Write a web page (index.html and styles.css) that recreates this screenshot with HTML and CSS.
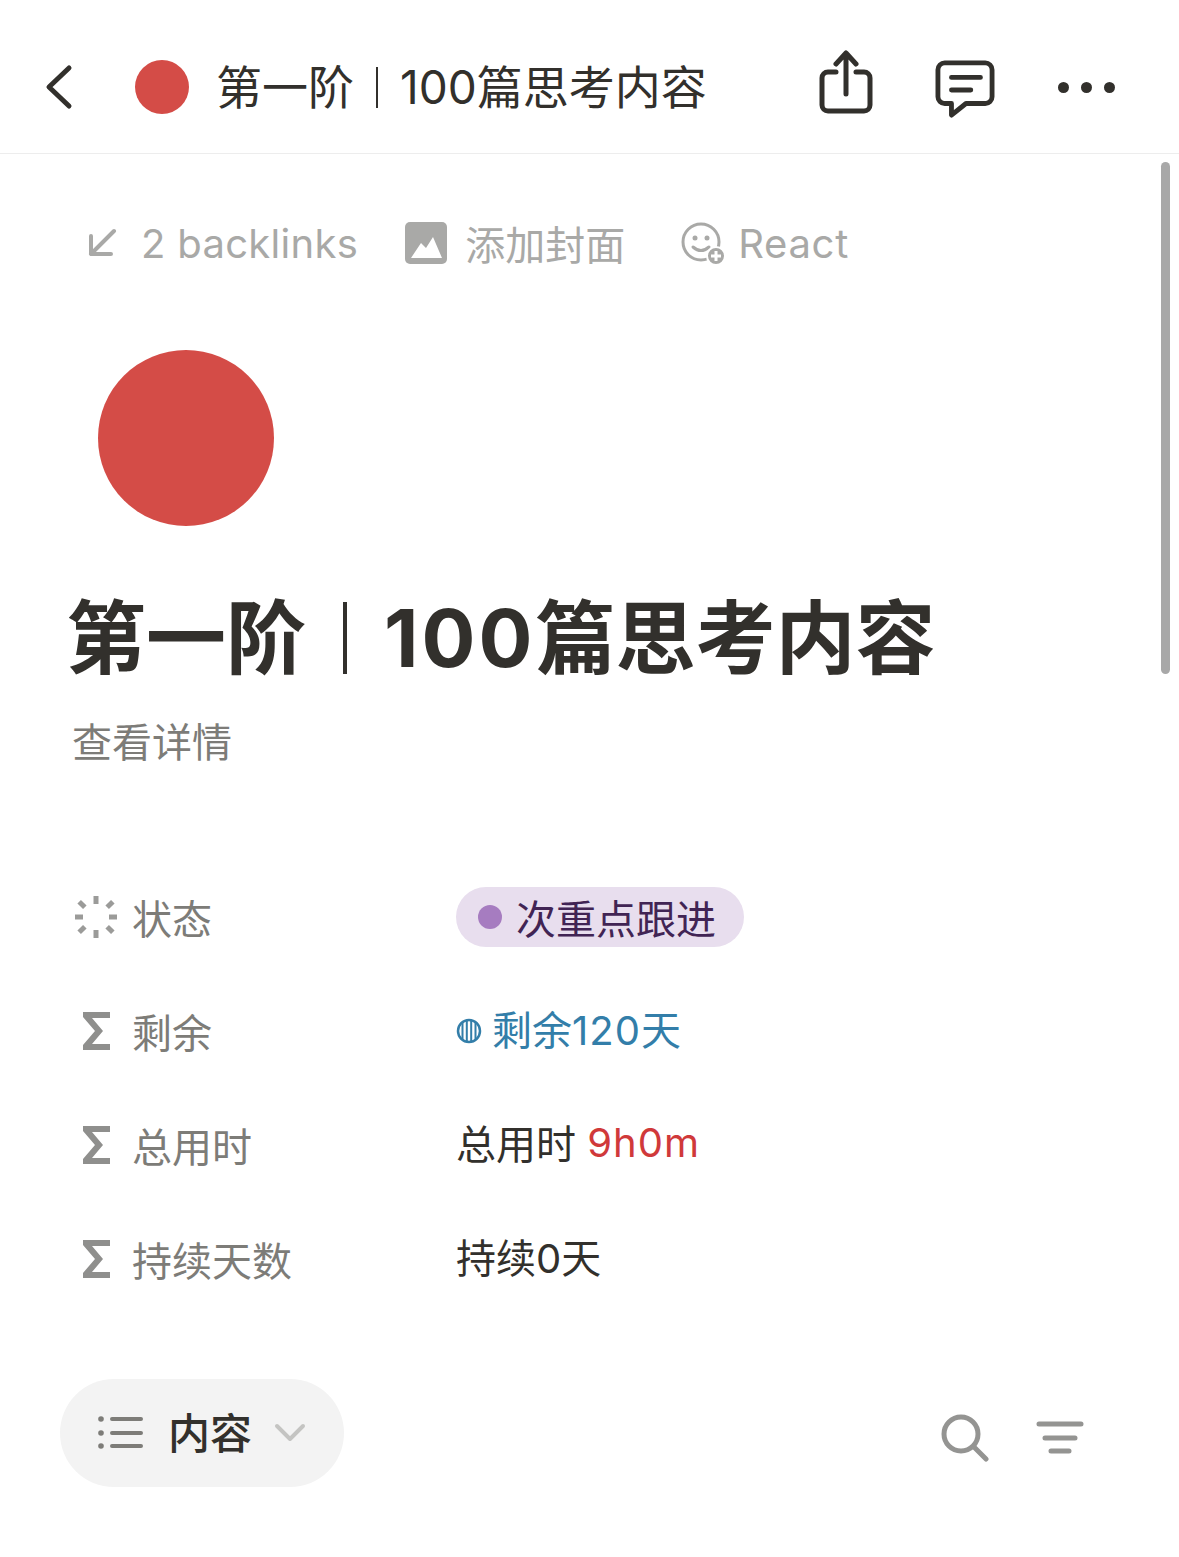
FILE: index.html
```html
<!DOCTYPE html>
<html lang="zh-CN">
<head>
    <meta charset="UTF-8">
    <title>第一阶｜100篇思考内容</title>
    <link rel="stylesheet" href="styles.css">
</head>
<body>
    <header class="topbar">
        <svg class="back-icon" width="34" height="50" viewBox="0 0 34 50"><path d="M25 6 5 25l20 19"/></svg>
        <div class="top-dot"></div>
        <div class="top-title">第一阶<span class="top-sep"></span>100篇思考内容</div>
        <div class="top-actions">
            <svg class="top-icon share-icon" width="56" height="64" viewBox="0 0 56 64"><path d="M17 22H9a6 6 0 0 0-6 6v27a6 6 0 0 0 6 6h36a6 6 0 0 0 6-6V28a6 6 0 0 0-6-6h-8"/><path d="M27 44V4M17 14 27 3l10 11"/></svg>
            <svg class="top-icon comment-icon" width="60" height="58" viewBox="0 0 62 60"><path d="M10 3h42a7 7 0 0 1 7 7v28a7 7 0 0 1-7 7H32L17 57V45h-7a7 7 0 0 1-7-7V10a7 7 0 0 1 7-7z"/><path d="M17 18h30M17 31h20"/></svg>
            <div class="more-dots"><i></i><i></i><i></i></div>
        </div>
    </header>

    <main class="page">
        <div class="meta-row">
            <div class="meta-item meta-backlinks">
                <svg width="30" height="30" viewBox="0 0 30 30"><path d="M27 3 4 26M4 8v18h20"/></svg>
                <span class="meta-latin">2 backlinks</span>
            </div>
            <div class="meta-item meta-cover">
                <svg width="42" height="42" viewBox="0 0 42 42"><rect width="42" height="42" rx="5" fill="#a9a9a7"/><path d="M6 36 16 21l5 5 7-11 9 21z" fill="#fff"/></svg>
                <span>添加封面</span>
            </div>
            <div class="meta-item meta-react">
                <svg width="44" height="44" viewBox="0 0 44 44"><circle cx="20" cy="21" r="18" fill="none" stroke="#a9a9a7" stroke-width="3"/><circle cx="14" cy="17" r="2.500" fill="#a9a9a7"/><circle cx="26" cy="17" r="2.500" fill="#a9a9a7"/><path d="M12 26q8 7 16 0" fill="none" stroke="#a9a9a7" stroke-width="3" stroke-linecap="round"/><circle cx="35" cy="35" r="9" fill="#a9a9a7" stroke="#fff" stroke-width="2"/><path d="M35 30v10M30 35h10" stroke="#fff" stroke-width="3"/></svg>
                <span class="meta-latin">React</span>
            </div>
        </div>

        <div class="page-dot"></div>
        <h1 class="page-title">第一阶<span class="title-sep"></span><span class="title-num">100</span>篇思考内容</h1>
        <div class="detail-link">查看详情</div>

        <div class="props">
            <div class="prop">
                <div class="prop-label">
                    <svg class="prop-icon" width="42" height="42" viewBox="0 0 42 42"><g fill="#9b9b99"><rect x="18.500" y="0" width="5" height="8"/><rect x="18.500" y="34" width="5" height="8"/><rect x="0" y="18.500" width="8" height="5"/><rect x="34" y="18.500" width="8" height="5"/><rect x="3" y="6" width="8" height="5" transform="rotate(45 7 8.500)"/><rect x="31" y="6" width="8" height="5" transform="rotate(-45 35 8.500)"/><rect x="3" y="31" width="8" height="5" transform="rotate(-45 7 33.500)"/><rect x="31" y="31" width="8" height="5" transform="rotate(45 35 33.500)"/></g></svg>
                    <span>状态</span>
                </div>
                <div class="prop-value">
                    <span class="pill"><i class="pill-dot"></i>次重点跟进</span>
                </div>
            </div>
            <div class="prop">
                <div class="prop-label">
                    <svg class="prop-icon" width="42" height="42" viewBox="0 0 42 42"><path class="sigma" d="M8 2h27v6H17l11 13-11 13h18v6H8v-5l12-14L8 7z"/></svg>
                    <span>剩余</span>
                </div>
                <div class="prop-value value-up value-blue">
                    <svg class="ring-icon" width="26" height="26" viewBox="0 0 26 26"><circle cx="13" cy="13" r="11" fill="none" stroke="#337ea9" stroke-width="2.500"/><path d="M6.500 4v18M10.800 2v22M15.200 2v22M19.500 4v18" stroke="#337ea9" stroke-width="2"/></svg>
                    <span>剩余<span class="value-num">120</span>天</span>
                </div>
            </div>
            <div class="prop">
                <div class="prop-label">
                    <svg class="prop-icon" width="42" height="42" viewBox="0 0 42 42"><path class="sigma" d="M8 2h27v6H17l11 13-11 13h18v6H8v-5l12-14L8 7z"/></svg>
                    <span>总用时</span>
                </div>
                <div class="prop-value value-up">总用时 <span class="value-red value-num">9h0m</span></div>
            </div>
            <div class="prop">
                <div class="prop-label">
                    <svg class="prop-icon" width="42" height="42" viewBox="0 0 42 42"><path class="sigma" d="M8 2h27v6H17l11 13-11 13h18v6H8v-5l12-14L8 7z"/></svg>
                    <span>持续天数</span>
                </div>
                <div class="prop-value value-up">持续0天</div>
            </div>
        </div>

        <div class="toolbar">
            <div class="view-pill">
                <svg class="list-icon" width="46" height="36" viewBox="0 0 46 36"><g fill="#7d7c78"><circle cx="4" cy="4" r="2.800"/><circle cx="4" cy="18" r="2.800"/><circle cx="4" cy="31" r="2.800"/></g><path d="M15 4h29M15 18h29M15 31h29"/></svg>
                <span class="view-name">内容</span>
                <svg class="chev-icon" width="32" height="20" viewBox="0 0 32 20"><path d="M3 3 16 16 29 3"/></svg>
            </div>
            <div class="tool-icons">
                <svg width="48" height="48" viewBox="0 0 48 48"><circle cx="20" cy="20" r="17"/><path d="m33 33 12 12"/></svg>
                <svg width="48" height="34" viewBox="0 0 48 34"><path d="M3 3h42M9 17h30M15 30h18"/></svg>
            </div>
        </div>
    </main>

    <div class="scroll-thumb"></div>
</body>
</html>
```

FILE: styles.css
```css
*{margin: 0; padding: 0; box-sizing: border-box;}
body{
    width: 100%;
    height: 1557px;
    overflow: hidden;
    background-color: #fff;
    color: #32302c;
    font-family: Inter, "Noto Sans CJK SC", sans-serif;
}
svg{display: block; flex: none;}

/* top bar */
.topbar{
    height: 154px;
    padding: 21px 64px 0 44px;
    display: flex;
    align-items: center;
    border-bottom: 1px solid #ededed;
}
.back-icon path{
    fill: none;
    stroke: #32302c;
    stroke-width: 5;
    stroke-linecap: round;
    stroke-linejoin: round;
}
.top-dot{
    width: 54px;
    height: 54px;
    margin-left: 57px;
    border-radius: 50%;
    background-color: #d44c47;
}
.top-title{
    margin-left: 27px;
    font-size: 46px;
    line-height: 56px;
    white-space: nowrap;
    display: flex;
    align-items: center;
}
.top-sep{
    width: 2px;
    height: 41px;
    margin: 0 22px;
    background-color: #32302c;
}
.top-actions{
    margin-left: auto;
    display: flex;
    align-items: center;
}
.top-icon{
    fill: none;
    stroke: #32302c;
    stroke-width: 5;
    stroke-linecap: round;
    stroke-linejoin: round;
}
.share-icon{margin-bottom: 11px;}
.comment-icon{margin: 4px 63px 0 60px;}
.more-dots{
    display: flex;
    gap: 12px;
}
.more-dots i{
    width: 11px;
    height: 11px;
    border-radius: 50%;
    background-color: #32302c;
}

/* content */
.page{
    padding: 0 60px;
}
.meta-row{
    height: 70px;
    margin-top: 54px;
    padding-left: 27px;
    display: flex;
    align-items: center;
    color: #a9a9a7;
    font-size: 40px;
}
.meta-item{
    display: flex;
    align-items: center;
}
.meta-latin{letter-spacing: .3px;}
.meta-backlinks svg{
    fill: none;
    stroke: #a9a9a7;
    stroke-width: 4;
    stroke-linecap: round;
    stroke-linejoin: round;
}
.meta-backlinks span{margin-left: 24px;}
.meta-cover{margin-left: 47px;}
.meta-cover span{margin-left: 18px;}
.meta-react{margin-left: 56px;}
.meta-react span{margin-left: 13px; letter-spacing: .7px;}

.page-dot{
    width: 176px;
    height: 176px;
    margin: 72px 0 0 38px;
    border-radius: 50%;
    background-color: #d44c47;
}
.page-title{
    margin: 54px 0 0 6px;
    display: flex;
    align-items: center;
    font-size: 80px;
    line-height: 116px;
    font-weight: 700;
    white-space: nowrap;
}
.title-sep{
    width: 4px;
    height: 72px;
    margin: 0 37px 0 37px;
    background-color: #32302c;
}
.title-num{letter-spacing: 3px;}
.detail-link{
    margin: 20px 0 0 12px;
    font-size: 40px;
    line-height: 54px;
    color: #7d7c78;
}

/* properties */
.props{
    margin-top: 90px;
}
.prop{
    height: 114px;
    display: flex;
    align-items: center;
    font-size: 40px;
}
.prop-label{
    width: 396px;
    padding-left: 15px;
    display: flex;
    align-items: center;
    gap: 15px;
    color: #7d7c78;
}
.sigma{fill: #8f8f8d;}
.prop-value{
    display: flex;
    align-items: center;
    white-space: pre;
}
.value-up{margin-top: -6px;}
.value-blue{color: #337ea9;}
.value-red{color: #d0393a;}
.value-num{letter-spacing: 1px;}
.ring-icon{margin-right: 10px; margin-top: 6px;}
.pill{
    height: 60px;
    padding: 0 28px 0 22px;
    display: flex;
    align-items: center;
    border-radius: 30px;
    background-color: #e8deee;
    color: #412454;
}
.pill-dot{
    width: 24px;
    height: 24px;
    margin-right: 14px;
    border-radius: 50%;
    background-color: #a67cc0;
}

/* view toolbar */
.toolbar{
    margin-top: 63px;
    display: flex;
    align-items: center;
    justify-content: space-between;
}
.view-pill{
    width: 284px;
    height: 108px;
    padding-left: 37px;
    display: flex;
    align-items: center;
    border-radius: 54px;
    background-color: #f3f3f3;
}
.list-icon path{
    fill: none;
    stroke: #7d7c78;
    stroke-width: 4;
    stroke-linecap: round;
}
.view-name{
    margin: 0 0 6px 25px;
    font-size: 42px;
    font-weight: 500;
}
.chev-icon{margin-left: 22px;}
.chev-icon path{
    fill: none;
    stroke: #c4c4c2;
    stroke-width: 4;
    stroke-linecap: round;
    stroke-linejoin: round;
}
.tool-icons{
    margin: 10px 35px 0 0;
    display: flex;
    align-items: center;
    gap: 47px;
}
.tool-icons svg{
    fill: none;
    stroke: #949492;
    stroke-width: 5;
    stroke-linecap: round;
}

/* overlay scrollbar */
.scroll-thumb{
    position: absolute;
    top: 162px;
    left: 1161px;
    width: 9px;
    height: 512px;
    border-radius: 5px;
    background-color: #a8a8a8;
}
```
